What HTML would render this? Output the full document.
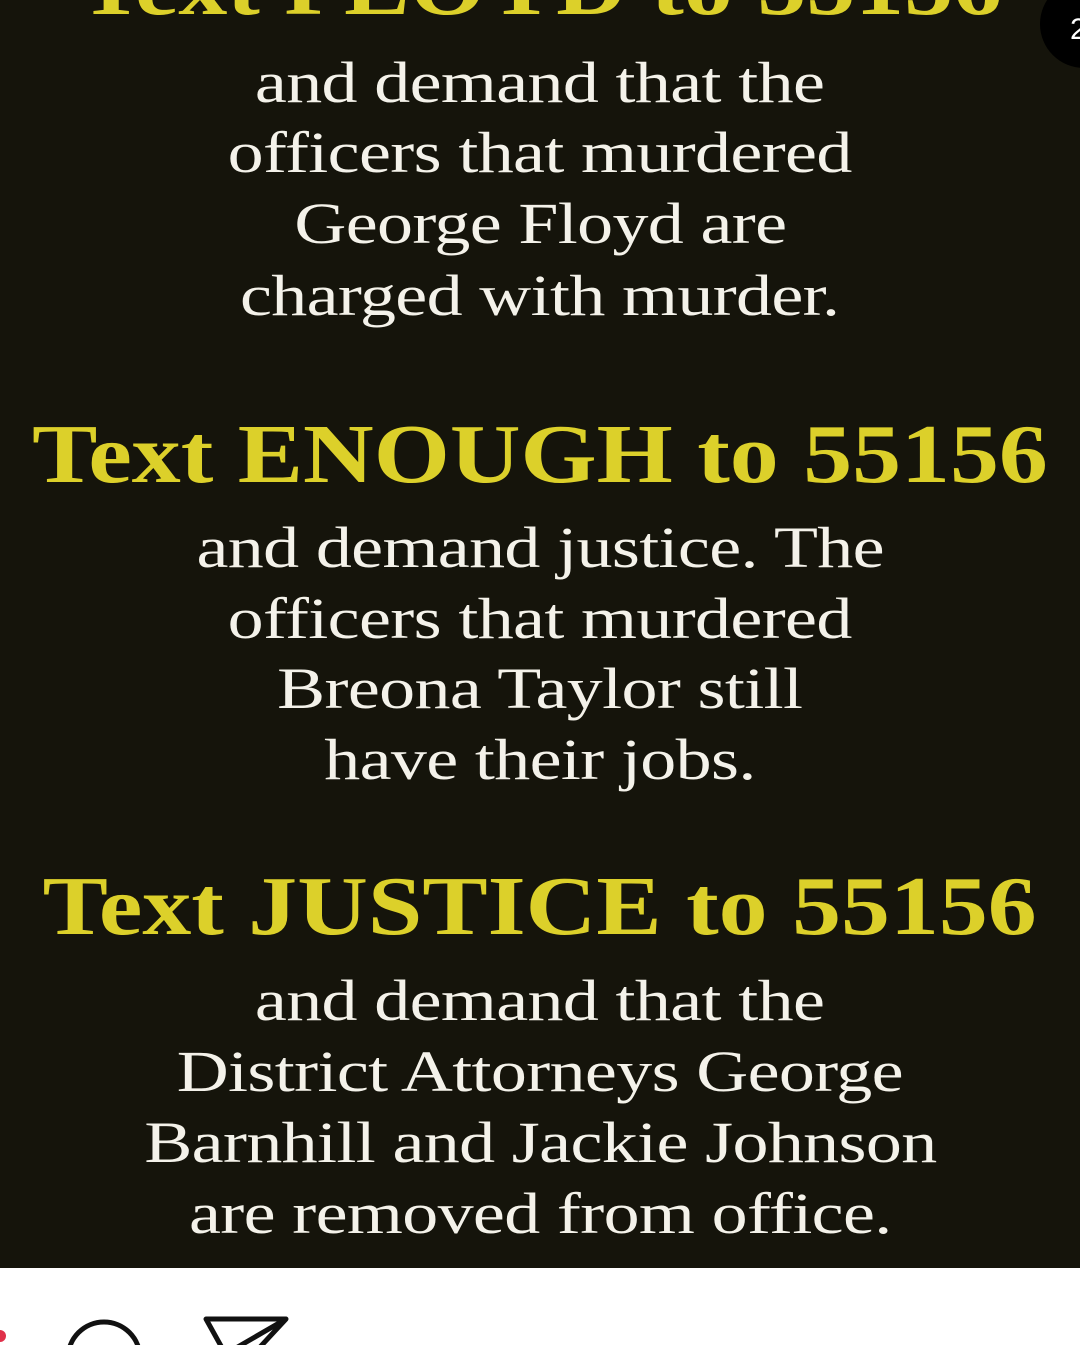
<!DOCTYPE html>
<html><head><meta charset="utf-8"><style>
html,body{margin:0;padding:0;width:1080px;height:1345px;overflow:hidden;background:#fff}
.bg{position:absolute;left:0;top:0;width:1080px;height:1268px;background:#15140b}
.l{position:absolute;left:0;width:1080px;text-align:center;white-space:nowrap;font-family:"Liberation Serif",serif;height:72px;line-height:72px}
.w{color:#f4f2ea;font-size:58px;letter-spacing:-0.5px}
.w span{display:inline-block;transform:scaleX(1.24)}
.y{color:#dcd02a;font-size:84px;font-weight:bold;height:90px;line-height:90px}
.y span{display:inline-block;transform:scaleX(1.165)}
</style></head><body>
<div class="bg"></div>
<div class="l y" style="top:-58px"><span>Text FLOYD to 55156</span></div>
<div style="position:absolute;left:1040px;top:-20px;width:90px;height:88px;border-radius:44px;background:#000;color:#fff;font:30px 'Liberation Sans',sans-serif;line-height:100px;padding-left:30px;box-sizing:border-box">2</div>
<div class="l w" style="top:47px"><span>and demand that the</span></div>
<div class="l w" style="top:117px"><span>officers that murdered</span></div>
<div class="l w" style="top:188px"><span>George Floyd are</span></div>
<div class="l w" style="top:260px"><span>charged with murder.</span></div>
<div class="l y" style="top:410px"><span>Text ENOUGH to 55156</span></div>
<div class="l w" style="top:512px"><span>and demand justice. The</span></div>
<div class="l w" style="top:583px"><span>officers that murdered</span></div>
<div class="l w" style="top:653px"><span>Breona Taylor still</span></div>
<div class="l w" style="top:724px"><span>have their jobs.</span></div>
<div class="l y" style="top:862px"><span>Text JUSTICE to 55156</span></div>
<div class="l w" style="top:965px"><span>and demand that the</span></div>
<div class="l w" style="top:1036px"><span>District Attorneys George</span></div>
<div class="l w" style="top:1107px"><span>Barnhill and Jackie Johnson</span></div>
<div class="l w" style="top:1178px"><span>are removed from office.</span></div>
<svg style="position:absolute;left:0;top:1268px" width="400" height="77">
<circle cx="0" cy="68" r="6" fill="#e0304a"/>
<circle cx="104" cy="90" r="36" fill="none" stroke="#111" stroke-width="5"/>
<path d="M206 51 L286 51 L236 105 Z M286 51 L236 80" fill="none" stroke="#111" stroke-width="5" stroke-linejoin="round"/>
</svg>
</body></html>
